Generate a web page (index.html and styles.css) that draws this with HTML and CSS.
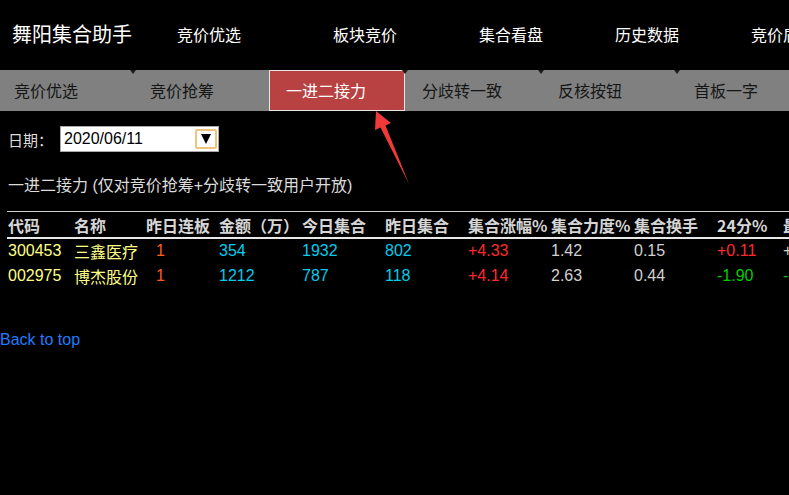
FILE: index.html
```html
<!DOCTYPE html>
<html lang="zh-CN">
<head>
<meta charset="utf-8">
<title>舞阳集合助手</title>
<link rel="stylesheet" href="styles.css">
</head>
<body>
<header class="topbar">
  <div class="brand">舞阳集合助手</div>
  <nav class="mainnav">
    <a class="nav-item w156">竞价优选</a>
    <a class="nav-item w146">板块竞价</a>
    <a class="nav-item w136">集合看盘</a>
    <a class="nav-item w136">历史数据</a>
    <a class="nav-item w136">竞价盾</a>
  </nav>
</header>
<div class="tabs">
  <div class="tab">竞价优选</div>
  <div class="tab notch">竞价抢筹</div>
  <div class="tab active">一进二接力</div>
  <div class="tab notch">分歧转一致</div>
  <div class="tab notch">反核按钮</div>
  <div class="tab notch">首板一字</div>
</div>
<main class="content">
  <div class="date-row">
    <span class="date-label">日期：</span>
    <div class="date-input">
      <span class="date-value">2020/06/11</span>
      <span class="date-btn"><span class="tri"></span></span>
    </div>
  </div>
  <p class="heading">一进二接力 (仅对竞价抢筹+分歧转一致用户开放)</p>
  <table class="grid">
    <colgroup>
      <col class="c66"><col class="c72"><col class="c73"><col class="c83"><col class="c83"><col class="c83"><col class="c83"><col class="c83"><col class="c83"><col class="c66"><col class="c83">
    </colgroup>
    <thead>
      <tr>
        <th>代码</th><th>名称</th><th>昨日连板</th><th>金额（万）</th><th>今日集合</th><th>昨日集合</th><th>集合涨幅%</th><th>集合力度%</th><th>集合换手</th><th>24分%</th><th>最高%</th>
      </tr>
    </thead>
    <tbody>
      <tr>
        <td class="yel">300453</td><td class="yel">三鑫医疗</td><td class="org pl">1</td><td class="cyan">354</td><td class="cyan">1932</td><td class="cyan">802</td><td class="red">+4.33</td><td class="gry">1.42</td><td class="gry">0.15</td><td class="red">+0.11</td><td class="gry">+</td>
      </tr>
      <tr>
        <td class="yel">002975</td><td class="yel">博杰股份</td><td class="org pl">1</td><td class="cyan">1212</td><td class="cyan">787</td><td class="cyan">118</td><td class="red">+4.14</td><td class="gry">2.63</td><td class="gry">0.44</td><td class="grn">-1.90</td><td class="grn">-</td>
      </tr>
    </tbody>
  </table>
</main>
<a class="backtop">Back to top</a>
<svg class="pointer" width="789" height="495" viewBox="0 0 789 495">
  <polygon points="376,111 391,123 385.5,125.5 409,184 380.5,127.5 375,130" fill="#f03a3a"/>
</svg>
</body>
</html>
```

FILE: styles.css
```css
html, body {
  margin: 0;
  padding: 0;
  background: #000;
  overflow: hidden;
}
body {
  width: 789px;
  height: 495px;
  position: relative;
  font-family: "Liberation Sans", "Noto Sans CJK SC", sans-serif;
  font-size: 16px;
  color: #ddd;
}
.topbar {
  height: 70px;
  display: flex;
  align-items: center;
  white-space: nowrap;
  padding-bottom: 2px;
  box-sizing: border-box;
}
.brand {
  flex: none;
  font-family: "Noto Sans CJK SC", sans-serif;
  font-size: 20px;
  color: #fff;
  margin-left: 12px;
  width: 165px;
  line-height: 24px;
}
.mainnav {
  display: flex;
  flex: none;
}
.nav-item {
  font-family: "Noto Sans CJK SC", sans-serif;
  font-size: 16px;
  color: #fff;
  line-height: 22px;
  flex: none;
}
.w156 { width: 156px; }
.w146 { width: 146px; }
.w136 { width: 136px; }

.tabs {
  height: 41px;
  background: #808080;
  display: flex;
  margin-left: -3px;
  white-space: nowrap;
}
.tab {
  position: relative;
  flex: none;
  width: 136px;
  box-sizing: border-box;
  padding-left: 17px;
  font-family: "Noto Sans CJK SC", sans-serif;
  font-size: 16px;
  line-height: 41px;
  color: #151515;
}
.tab.notch::before {
  content: "";
  position: absolute;
  left: -3px;
  top: 0;
  border-left: 3px solid transparent;
  border-right: 3px solid transparent;
  border-top: 4px solid #1a1a1a;
}
.tab.active {
  background: #b84141;
  color: #fff;
  border: 1px solid #e6e6e6;
  padding-left: 16px;
  line-height: 39px;
}

.content {
  padding-left: 8px;
}
.date-row {
  display: flex;
  align-items: center;
  margin-top: 15px;
  height: 26px;
}
.date-label {
  font-family: "Noto Sans CJK SC", sans-serif;
  font-size: 15px;
  color: #ddd;
  width: 52px;
}
.date-input {
  width: 159px;
  height: 26px;
  box-sizing: border-box;
  background: #fff;
  border: 1px solid #a9a9a9;
  display: flex;
  align-items: center;
  justify-content: space-between;
  padding: 0 1px 0 3px;
}
.date-value {
  color: #000;
  font-size: 16px;
}
.date-btn {
  width: 22px;
  height: 20px;
  box-sizing: border-box;
  border: 2px solid #ecc47a;
  border-radius: 2px;
  display: flex;
  align-items: center;
  justify-content: center;
}
.tri {
  width: 0;
  height: 0;
  border-left: 5px solid transparent;
  border-right: 5px solid transparent;
  border-top: 10px solid #000;
}
.heading {
  margin: 22px 0 0;
  line-height: 24px;
  font-size: 16px;
  color: #dcdcdc;
  white-space: nowrap;
}
.grid {
  margin-top: 13px;
  margin-left: -1px;
  border-collapse: collapse;
  table-layout: fixed;
  width: 854px;
  white-space: nowrap;
  border-top: 1px solid #cfcfcf;
}
.c66 { width: 66px; }
.c72 { width: 72px; }
.c73 { width: 73px; }
.c83 { width: 83px; }
.grid th {
  text-align: left;
  font-weight: bold;
  font-size: 16px;
  color: #d6d6d6;
  height: 25px;
  padding: 0 0 0 1px;
  border-bottom: 2px solid #e8e8e8;
  font-family: "Noto Sans CJK SC", sans-serif;
}
.grid td {
  height: 25px;
  padding: 0 0 0 1px;
  font-size: 16px;
  vertical-align: middle;
}
.grid tbody tr:first-child td {
  height: 23px;
}
.grid td.pl { padding-left: 11px; }
.yel { color: #ffff88; }
.org { color: #ff5c1e; }
.cyan { color: #00ccec; }
.red { color: #ff2b2b; }
.gry { color: #d0d0d0; }
.grn { color: #00cc00; }

.backtop {
  display: block;
  margin-top: 40px;
  color: #1e7cff;
  font-size: 16px;
  line-height: 24px;
}
.pointer {
  position: absolute;
  left: 0;
  top: 0;
  pointer-events: none;
}
```
